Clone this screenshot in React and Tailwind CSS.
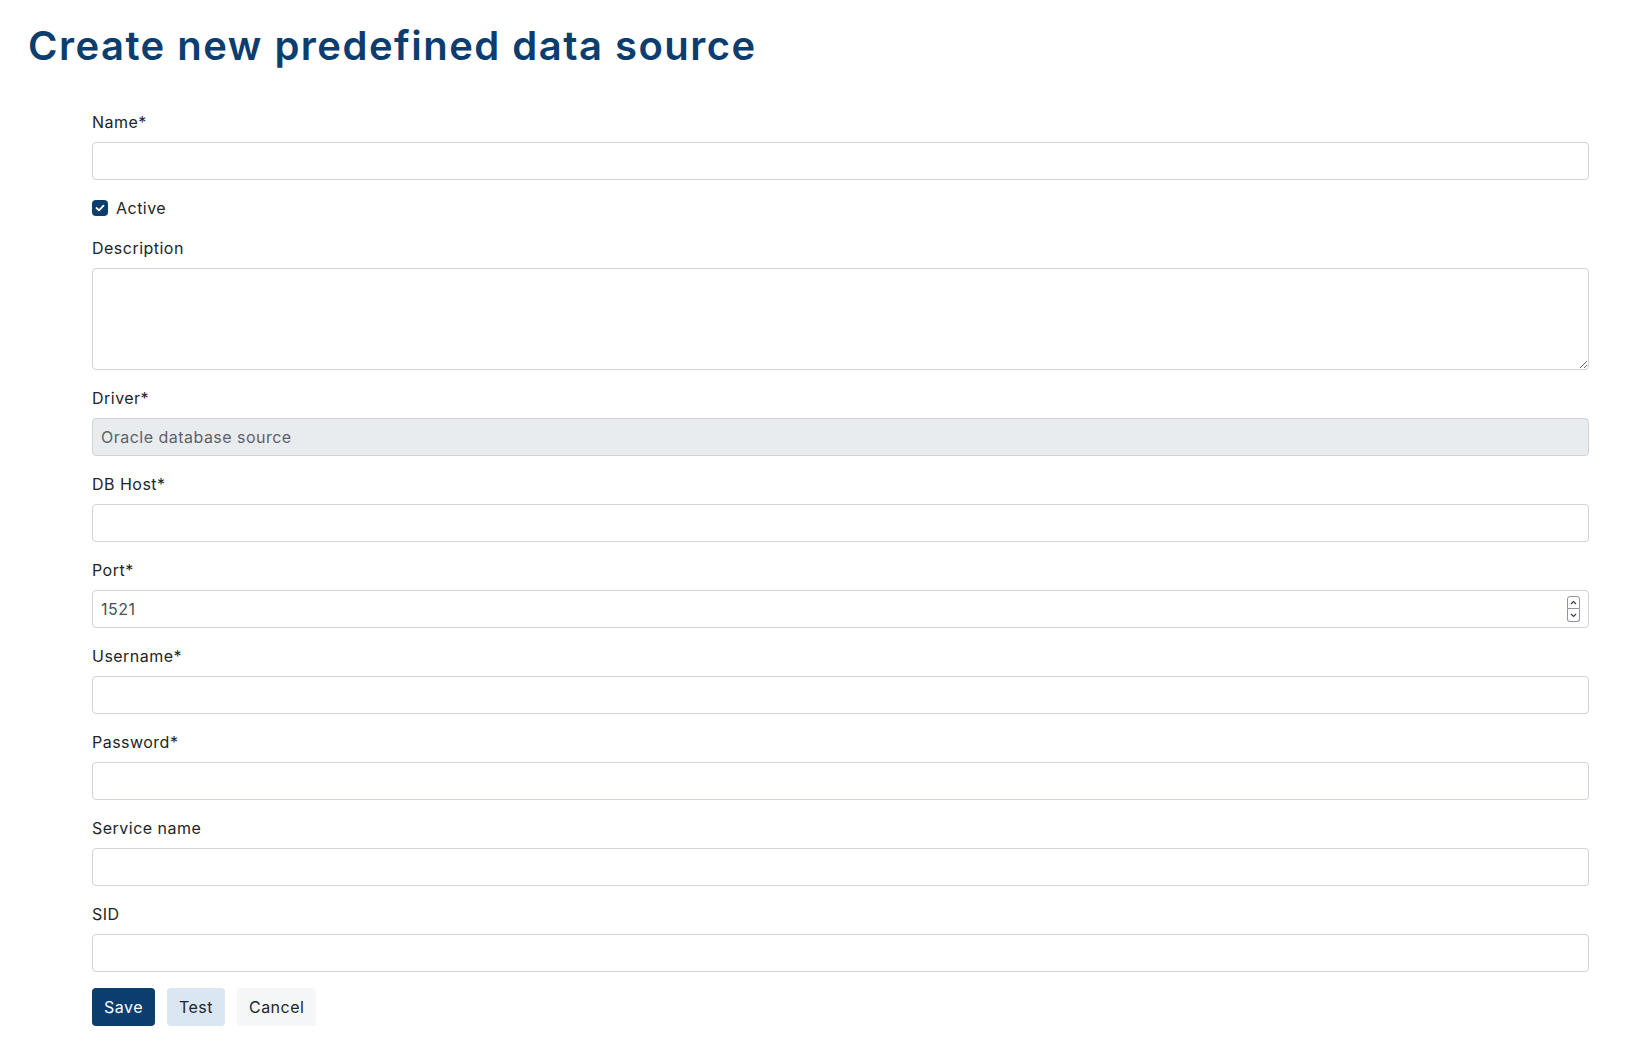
import React from 'react';

/**
 * Create predefined data source form
 * Plain stacked fields, Bootstrap-like spacing (label 24 + 8 + input 38 + 16)
 */

function Field({ label, children }) {
  return (
    <div className="mb-4">
      <label className="block mb-2 leading-6 text-base">{label}</label>
      {children}
    </div>
  );
}

function TextInput({ value = '', disabled = false }) {
  return (
    <input
      type="text"
      defaultValue={value}
      disabled={disabled}
      className={`block w-full h-[38px] px-2 text-base rounded border border-[#ced4da] outline-none ${
        disabled ? 'bg-[#e9ecef] text-[#5c6168]' : 'bg-white text-[#495057]'
      }`}
    />
  );
}

// little stacked up/down box drawn over the port field
function Spinner() {
  return (
    <div className="absolute right-[9px] top-[6px] flex flex-col">
      <div className="w-[13px] h-[13px] border border-[#8f959b] rounded-t-[3px] flex items-center justify-center bg-white">
        <svg width="7" height="5" viewBox="0 0 7 5" fill="none">
          <path d="M1 4 L3.5 1.5 L6 4" stroke="#3a3f44" strokeWidth="1.2" />
        </svg>
      </div>
      <div className="w-[13px] h-[13px] border border-t-0 border-[#8f959b] rounded-b-[3px] flex items-center justify-center bg-white">
        <svg width="7" height="5" viewBox="0 0 7 5" fill="none">
          <path d="M1 1 L3.5 3.5 L6 1" stroke="#3a3f44" strokeWidth="1.2" />
        </svg>
      </div>
    </div>
  );
}

export default function App() {
  return (
    <div className="min-h-screen bg-white text-[#212529] font-['Inter','Liberation_Sans',sans-serif] tracking-[0.03em]">
      <div className="pt-[22px] pl-[28px]">
        <h1 className="text-[40px] leading-[48px] font-semibold text-[#0b3d6e] tracking-[0.037em]">
          Create new predefined data source
        </h1>
      </div>

      <form className="mt-[40px] ml-[92px] mr-[58px]" onSubmit={(e) => e.preventDefault()}>
        <Field label="Name*">
          <TextInput />
        </Field>

        {/* Active checkbox */}
        <div className="flex items-center h-6 mb-4">
          <span className="w-4 h-4 rounded-[4px] bg-[#0b3d6e] flex items-center justify-center">
            <svg width="10" height="8" viewBox="0 0 10 8" fill="none">
              <path d="M1.5 4 L4 6.3 L8.5 1.7" stroke="white" strokeWidth="1.8" strokeLinecap="round" strokeLinejoin="round" />
            </svg>
          </span>
          <span className="ml-2 text-base leading-6">Active</span>
        </div>

        <Field label="Description">
          <textarea className="block w-full h-[102px] px-2 py-1.5 text-base rounded border border-[#ced4da] outline-none resize-y" />
        </Field>

        <Field label="Driver*">
          <TextInput value="Oracle database source" disabled />
        </Field>

        <Field label="DB Host*">
          <TextInput />
        </Field>

        <Field label="Port*">
          <div className="relative">
            <TextInput value="1521" />
            <Spinner />
          </div>
        </Field>

        <Field label="Username*">
          <TextInput />
        </Field>

        <Field label="Password*">
          <TextInput />
        </Field>

        <Field label="Service name">
          <TextInput />
        </Field>

        <Field label="SID">
          <TextInput />
        </Field>

        <div className="flex gap-3">
          <button type="submit" className="h-[38px] px-3 rounded bg-[#0b3d6e] text-white text-base">
            Save
          </button>
          <button type="button" className="h-[38px] px-3 rounded bg-[#dae6f2] text-[#212529] text-base">
            Test
          </button>
          <button type="button" className="h-[38px] px-3 rounded bg-[#f5f6f8] text-[#212529] text-base">
            Cancel
          </button>
        </div>
      </form>
    </div>
  );
}
